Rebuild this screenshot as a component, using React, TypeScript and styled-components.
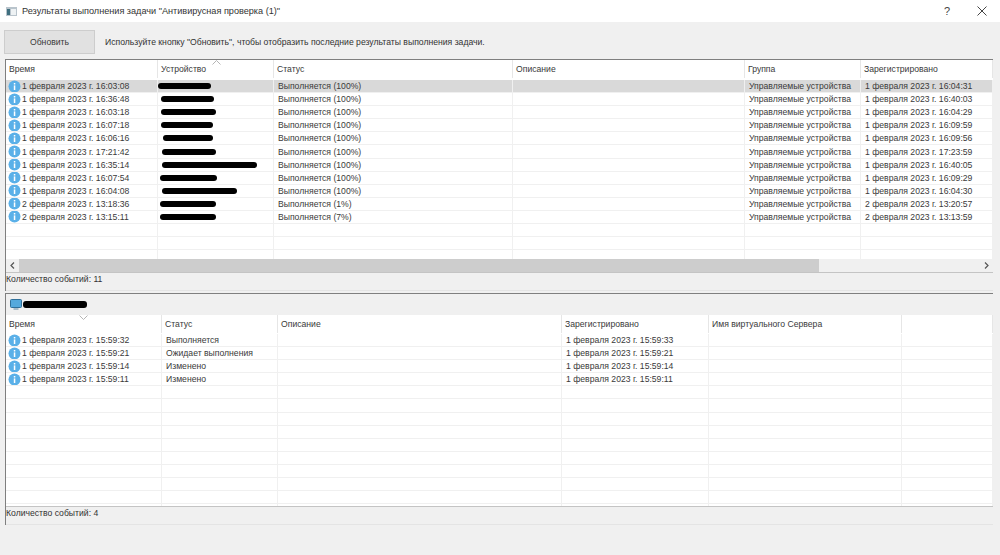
import React from "react";
import styled, { createGlobalStyle } from "styled-components";

const GlobalStyle = createGlobalStyle`
  html, body {
    margin: 0;
    padding: 0;
    background: #f0f0f0;
  }
  body {
    font-family: "Liberation Sans", Arial, sans-serif;
    font-size: 8.65px;
    color: #3a3a3a;
  }
`;

const Window = styled.div`
  width: 1000px;
  height: 555px;
  overflow: hidden;
  display: flex;
  flex-direction: column;
  background: #f0f0f0;
`;

const TitleBar = styled.div`
  height: 22px;
  flex: none;
  background: #fff;
  display: flex;
  align-items: center;
  padding: 0 9px 0 6px;
  font-size: 9.15px;
  color: #333;
`;

const TitleText = styled.span`
  margin-left: 5px;
  flex: 1;
`;

const TitleAction = styled.span`
  width: 18px;
  margin-left: 17px;
  display: flex;
  justify-content: center;
  color: #444;
  font-size: 11px;
`;

const Toolbar = styled.div`
  height: 37px;
  flex: none;
  display: flex;
  align-items: center;
  padding: 2px 0 0 4px;
  box-sizing: border-box;
  gap: 10px;
`;

const RefreshButton = styled.button`
  width: 91px;
  height: 24px;
  background: #e1e1e1;
  border: 1px solid #cdcdcd;
  font: inherit;
  color: #3a3a3a;
  padding: 0;
`;

const Hint = styled.span`
  color: #333;
`;

const Panel = styled.section`
  margin-left: 5px;
  width: 988px;
  flex: none;
  border-left: 1px solid #7f7f7f;
  border-top: 1px solid #7f7f7f;
  box-sizing: border-box;
  display: flex;
  flex-direction: column;
`;

const TablePanel = styled(Panel)`
  height: 232px;
`;

const DetailPanel = styled(Panel)`
  height: 232px;
  margin-top: 2px;
`;

const DeviceBar = styled.div`
  height: 21px;
  flex: none;
  display: flex;
  align-items: center;
  padding-left: 4px;
  background: #f0f0f0;
`;

const Table = styled.div`
  flex: 1;
  min-height: 0;
  overflow: hidden;
  background: #fff;
`;

const HeaderRow = styled.div<{ $cols: string; $h: number; $pad?: number }>`
  position: relative;
  display: grid;
  grid-template-columns: ${(p) => p.$cols};
  height: ${(p) => p.$h}px;
  box-sizing: border-box;
  padding-bottom: ${(p) => p.$pad ?? 0}px;
  background: #fff;
`;

const HeaderCell = styled.div`
  display: flex;
  align-items: center;
  padding-left: 3px;
  border-right: 1px solid #e6e6e6;
  color: #3a3a3a;
`;

const SortMark = styled.svg<{ $left: number }>`
  position: absolute;
  top: 0;
  left: ${(p) => p.$left}px;
`;

const Row = styled.div<{ $cols: string; $selected?: boolean }>`
  display: grid;
  grid-template-columns: ${(p) => p.$cols};
  height: 13.1px;
  box-sizing: border-box;
  border-bottom: 1px solid #f0f0f0;
  background: ${(p) => (p.$selected ? "#d9d9d9" : "#fff")};
`;

const Cell = styled.div`
  display: flex;
  align-items: center;
  padding-left: 4px;
  border-right: 1px solid #f0f0f0;
  white-space: nowrap;
  overflow: hidden;
  line-height: 12px;
`;

const TimeCell = styled(Cell)`
  padding-left: 2px;
  gap: 1px;
`;

const Redaction = styled.span<{ $offset: number; $width: number; $h?: number }>`
  display: block;
  flex: none;
  margin-left: ${(p) => p.$offset}px;
  width: ${(p) => p.$width}px;
  height: ${(p) => p.$h ?? 6}px;
  border-radius: 3px;
  background: #000;
`;

const DeviceCell = styled(Cell)`
  padding-left: 0;
`;

const ScrollBar = styled.div`
  height: 13px;
  flex: none;
  display: flex;
  align-items: center;
  background: #f0f0f0;
`;

const ScrollArrow = styled.span`
  width: 13px;
  display: flex;
  justify-content: center;
  flex: none;
`;

const ScrollTrack = styled.div`
  flex: 1;
  height: 100%;
`;

const ScrollThumb = styled.div`
  width: 800px;
  height: 100%;
  background: #cdcdcd;
`;

const StatusBar = styled.div`
  height: 19px;
  flex: none;
  border-top: 1px solid #c4c4c4;
  border-bottom: 1px solid #e4e4e4;
  box-sizing: border-box;
  background: #f0f0f0;
  color: #333;
  line-height: 12px;
`;

const InfoIcon = () => (
  <svg width="13" height="13" viewBox="0 0 13 13" style={{ flex: "none" }}>
    <circle cx="6.5" cy="6.5" r="6" fill="#5ab0e8" />
    <rect x="5.8" y="5.4" width="1.5" height="4.6" fill="#fff" />
    <rect x="5.8" y="3" width="1.5" height="1.5" fill="#fff" />
  </svg>
);

const AppIcon = () => (
  <svg width="11" height="9" viewBox="0 0 11 9">
    <rect width="11" height="9" fill="#b9c4cc" />
    <rect x="1" y="2" width="3" height="6" fill="#3f6f7f" />
    <rect x="5" y="2" width="5" height="6" fill="#eef2f4" />
  </svg>
);

const MonitorIcon = () => (
  <svg width="12" height="12" viewBox="0 0 12 12">
    <rect x="0.5" y="0.5" width="11" height="8" rx="1" fill="#55a9dc" stroke="#2f6f99" />
    <rect x="3.5" y="9" width="5" height="2" fill="#a9bcc8" />
  </svg>
);

const TOP_COLS = "152px 116px 239px 232px 116px 1fr";
const BOTTOM_COLS = "156px 116px 284px 147px 193px 1fr";

type TopRow = {
  time: string;
  offset: number;
  width: number;
  status: string;
  registered: string;
};

const topRows: TopRow[] = [
  { time: "1 февраля 2023 г.  16:03:08", offset: 0, width: 53, status: "Выполняется (100%)", registered: "1 февраля 2023 г.  16:04:31" },
  { time: "1 февраля 2023 г.  16:36:48", offset: 2.5, width: 53, status: "Выполняется (100%)", registered: "1 февраля 2023 г.  16:40:03" },
  { time: "1 февраля 2023 г.  16:03:18", offset: 2.5, width: 55, status: "Выполняется (100%)", registered: "1 февраля 2023 г.  16:04:29" },
  { time: "1 февраля 2023 г.  16:07:18", offset: 2.5, width: 52, status: "Выполняется (100%)", registered: "1 февраля 2023 г.  16:09:59" },
  { time: "1 февраля 2023 г.  16:06:16", offset: 5, width: 49.5, status: "Выполняется (100%)", registered: "1 февраля 2023 г.  16:09:56" },
  { time: "1 февраля 2023 г.  17:21:42", offset: 4, width: 54, status: "Выполняется (100%)", registered: "1 февраля 2023 г.  17:23:59" },
  { time: "1 февраля 2023 г.  16:35:14", offset: 4, width: 95, status: "Выполняется (100%)", registered: "1 февраля 2023 г.  16:40:05" },
  { time: "1 февраля 2023 г.  16:07:54", offset: 2, width: 57, status: "Выполняется (100%)", registered: "1 февраля 2023 г.  16:09:29" },
  { time: "1 февраля 2023 г.  16:04:08", offset: 4, width: 75, status: "Выполняется (100%)", registered: "1 февраля 2023 г.  16:04:30" },
  { time: "2 февраля 2023 г.  13:18:36", offset: 2, width: 56, status: "Выполняется (1%)", registered: "2 февраля 2023 г.  13:20:57" },
  { time: "2 февраля 2023 г.  13:15:11", offset: 2, width: 56, status: "Выполняется (7%)", registered: "2 февраля 2023 г.  13:13:59" },
];

const bottomRows = [
  { time: "1 февраля 2023 г.  15:59:32", status: "Выполняется", registered: "1 февраля 2023 г.  15:59:33" },
  { time: "1 февраля 2023 г.  15:59:21", status: "Ожидает выполнения", registered: "1 февраля 2023 г.  15:59:21" },
  { time: "1 февраля 2023 г.  15:59:14", status: "Изменено", registered: "1 февраля 2023 г.  15:59:14" },
  { time: "1 февраля 2023 г.  15:59:11", status: "Изменено", registered: "1 февраля 2023 г.  15:59:11" },
];

const topHeaders = ["Время", "Устройство", "Статус", "Описание", "Группа", "Зарегистрировано"];
const bottomHeaders = ["Время", "Статус", "Описание", "Зарегистрировано", "Имя виртуального Сервера", ""];

const emptyCells = (n: number) => Array.from({ length: n }, (_, i) => <Cell key={i} />);

const App = () => {
  return (
    <Window>
      <GlobalStyle />
      <TitleBar>
        <AppIcon />
        <TitleText>Результаты выполнения задачи "Антивирусная проверка (1)"</TitleText>
        <TitleAction>?</TitleAction>
        <TitleAction>
          <svg width="10" height="10" viewBox="0 0 10 10">
            <path d="M0.5 0.5L9.5 9.5M9.5 0.5L0.5 9.5" stroke="#444" strokeWidth="1" />
          </svg>
        </TitleAction>
      </TitleBar>

      <Toolbar>
        <RefreshButton>Обновить</RefreshButton>
        <Hint>Используйте кнопку "Обновить", чтобы отобразить последние результаты выполнения задачи.</Hint>
      </Toolbar>

      <TablePanel>
        <Table>
          <HeaderRow $cols={TOP_COLS} $h={20} $pad={2}>
            {topHeaders.map((h) => (
              <HeaderCell key={h}>{h}</HeaderCell>
            ))}
            <SortMark $left={206} width="9" height="5" viewBox="0 0 9 5">
              <path d="M0.5 4.5L4.5 0.5L8.5 4.5" fill="none" stroke="#b5b5b5" />
            </SortMark>
          </HeaderRow>
          {topRows.map((r, i) => (
            <Row key={r.time} $cols={TOP_COLS} $selected={i === 0}>
              <TimeCell>
                <InfoIcon />
                {r.time}
              </TimeCell>
              <DeviceCell>
                <Redaction $offset={r.offset} $width={r.width} />
              </DeviceCell>
              <Cell>{r.status}</Cell>
              <Cell />
              <Cell>Управляемые устройства</Cell>
              <Cell>{r.registered}</Cell>
            </Row>
          ))}
          {[0, 1, 2].map((i) => (
            <Row key={i} $cols={TOP_COLS}>
              {emptyCells(6)}
            </Row>
          ))}
        </Table>
        <ScrollBar>
          <ScrollArrow>
            <svg width="5" height="7" viewBox="0 0 5 7">
              <path d="M4 0.5L1 3.5L4 6.5" fill="none" stroke="#555" strokeWidth="1.2" />
            </svg>
          </ScrollArrow>
          <ScrollTrack>
            <ScrollThumb />
          </ScrollTrack>
          <ScrollArrow>
            <svg width="5" height="7" viewBox="0 0 5 7">
              <path d="M1 0.5L4 3.5L1 6.5" fill="none" stroke="#555" strokeWidth="1.2" />
            </svg>
          </ScrollArrow>
        </ScrollBar>
        <StatusBar>Количество событий: 11</StatusBar>
      </TablePanel>

      <DetailPanel>
        <DeviceBar>
          <MonitorIcon />
          <Redaction $offset={1} $width={64} $h={7} />
        </DeviceBar>
        <Table>
          <HeaderRow $cols={BOTTOM_COLS} $h={19} $pad={1}>
            {bottomHeaders.map((h, i) => (
              <HeaderCell key={i}>{h}</HeaderCell>
            ))}
            <SortMark $left={73} width="9" height="5" viewBox="0 0 9 5">
              <path d="M0.5 0.5L4.5 4.5L8.5 0.5" fill="none" stroke="#b5b5b5" />
            </SortMark>
          </HeaderRow>
          {bottomRows.map((r) => (
            <Row key={r.time} $cols={BOTTOM_COLS}>
              <TimeCell>
                <InfoIcon />
                {r.time}
              </TimeCell>
              <Cell>{r.status}</Cell>
              <Cell />
              <Cell>{r.registered}</Cell>
              <Cell />
              <Cell />
            </Row>
          ))}
          {Array.from({ length: 10 }, (_, i) => (
            <Row key={i} $cols={BOTTOM_COLS}>
              {emptyCells(6)}
            </Row>
          ))}
        </Table>
        <StatusBar>Количество событий: 4</StatusBar>
      </DetailPanel>
    </Window>
  );
};

export default App;
